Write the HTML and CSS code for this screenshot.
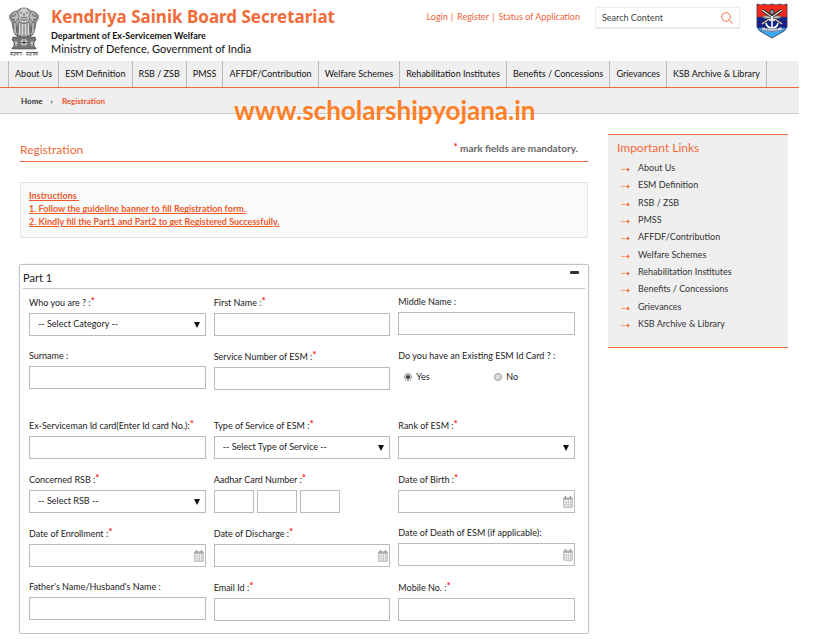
FILE: index.html
```
<!DOCTYPE html>
<html lang="en">
<head>
<meta charset="utf-8">
<title>Registration - Kendriya Sainik Board Secretariat</title>
<link rel="stylesheet" href="styles.css">
</head>
<body>
<svg class="defs" aria-hidden="true">
  <symbol id="calendar" viewBox="0 0 10 12">
    <path d="M1 2h8.200v9.200H.8V2z" fill="#fff" stroke="#aaa" stroke-width="1"/>
    <path d="M.5 1.500h9V4h-9z" fill="#b5b5b5"/>
    <path d="M2.500 0v3M7.500 0v3" stroke="#999" stroke-width="1.200"/>
    <path d="M1 6.300h8M1 8.700h8M3.300 4v7M5.500 4v7M7.500 4v7" stroke="#bbb" stroke-width=".7"/>
  </symbol>
  <symbol id="arrow" viewBox="0 0 9 5">
    <path d="M0 2.500h6.500" stroke="#f5a582" stroke-width="1"/>
    <path d="M6 .4 9 2.500 6 4.600z" fill="#f26a38"/>
  </symbol>
</svg>
<div class="page">
  <header class="header">
    <svg class="emblem" viewBox="0 0 30 50" role="img" aria-label="State Emblem of India">
      <g fill="#aaa" stroke="#444" stroke-width=".6">
        <path d="M3 6q-4 2-2 6l2 4 1 6 5 7h12l5-7 1-6 2-4q2-4-2-6l-4-2H7z"/>
        <path d="M9 5q0-4 6-4t6 4l1 5-3 5q-4 3-8 0l-3-5z" fill="#ccc"/>
        <path d="M3 6q4-3 6 0l1 5-4 4-4-3zM27 6q-4-3-6 0l-1 5 4 4 4-3z" fill="#bbb"/>
        <path d="M10 15q5 4 10 0l1 14H9z" fill="#ddd"/>
        <path d="M4 15l4 2 1 12-4-3zM26 15l-4 2-1 12 4-3z" fill="#bbb"/>
        <path d="M4 30h22l1 3-2 2v4l2 2v1H3v-1l2-2v-4l-2-2z" fill="#777"/>
        <circle cx="15" cy="35.500" r="4" fill="#eee"/>
      </g>
      <g fill="none" stroke="#333" stroke-width=".7">
        <path d="M11 6h2M17 6h2M15 6v3M12 10q3 2 6 0M11 12q4 3 8 0M10 4l2-2M20 4l-2-2M3 9h3M24 9h3M3 12l3 1M27 12l-3 1M5 7l2 1M25 7l-2 1"/>
        <path d="M12 17v11M15 18v11M18 17v11M7 18l1 8M23 18l-1 8M11 28v2M19 28v2M6 27l3 3M24 27l-3 3"/>
        <path d="M15 31.500v8M11 35.500h8M12.200 32.700l5.600 5.600M17.800 32.700l-5.600 5.600"/>
      </g>
      <path d="M6 36h3M21 36h3M7 34v5M23 34v5" stroke="#ddd" stroke-width="1"/>
      <path d="M1 45.500h12M17 45.500h12" stroke="#444" stroke-width=".8"/>
      <path d="M3 45.500v3M6 45.500v3M9 45.500v3M12 45.500v3M19 45.500v3M22 45.500v3M25 45.500v3M28 45.500v3M1 47.500h2M4 48h2M7 47h2M17 47.500h2M20 48h2M25 47h3" stroke="#555" stroke-width=".8"/>
    </svg>
    <div class="brand">
      <h1>Kendriya Sainik Board Secretariat</h1>
      <p class="dept">Department of Ex-Servicemen Welfare</p>
      <p class="ministry">Ministry of Defence, Government of India</p>
    </div>
    <div class="account"><a href="#">Login</a><i>|</i><a href="#">Register</a><i>|</i><a href="#">Status of Application</a></div>
    <form class="search">
      <input type="text" placeholder="Search Content" aria-label="Search Content">
      <button type="button" aria-label="Search">
        <svg viewBox="0 0 12 12" width="12" height="12" fill="none" stroke="#f0703f"><circle cx="5" cy="5" r="4.300"/><path d="M8.200 8.200 11.600 11.600"/></svg>
      </button>
    </form>
    <svg class="crest" viewBox="0 0 32 36" role="img" aria-label="Kendriya Sainik Board crest">
      <defs><clipPath id="shield"><path d="M1 1q4 2 7 0 4 2 8 0 4 2 8 0 3 2 7 0v23q-1 4-8 7l-7 4-7-4q-7-3-8-7z"/></clipPath></defs>
      <g clip-path="url(#shield)">
        <path fill="#f52a1d" d="M0 0h32v14H0z"/><path fill="#15248c" d="M0 14h32v11H0z"/><path fill="#3fa9f5" d="M0 25h32v11H0z"/>
      </g>
      <path d="M1 1q4 2 7 0 4 2 8 0 4 2 8 0 3 2 7 0v23q-1 4-8 7l-7 4-7-4q-7-3-8-7z" fill="none" stroke="#334" stroke-width=".8"/>
      <path d="M6 7 26 21M26 7 6 21" stroke="#222" stroke-width="3"/>
      <path d="M6 7 26 21M26 7 6 21" stroke="#ddd" stroke-width="1.300"/>
      <path d="M5 14q6-3 11 0 5-3 11 0-6 3-11 1-6 2-11-1z" fill="#bbb" stroke="#333" stroke-width=".6"/>
      <circle cx="16" cy="9" r="2.400" fill="#999" stroke="#222"/>
      <path d="M16 13v13M13 17h6M10 20q1 5 6 5t6-5" fill="none" stroke="#fff" stroke-width="1.600"/>
      <path d="M6 24q10 4 20 0v3q-10 3-20 0z" fill="#eee" stroke="#446" stroke-width=".6"/>
      <path d="M9 26.500q7 2 14 0" fill="none" stroke="#779" stroke-dasharray="1 1"/>
    </svg>
  </header>
  <nav class="nav">
    <ul>
      <li><a href="#">About Us</a></li><li><a href="#">ESM Definition</a></li><li><a href="#">RSB / ZSB</a></li><li><a href="#">PMSS</a></li><li><a href="#">AFFDF/Contribution</a></li><li><a href="#">Welfare Schemes</a></li><li><a href="#">Rehabilitation Institutes</a></li><li><a href="#">Benefits / Concessions</a></li><li><a href="#">Grievances</a></li><li><a href="#">KSB Archive &amp; Library</a></li>
    </ul>
  </nav>
  <div class="crumbs">
    <a href="#">Home</a><span class="sep">›</span><span class="current">Registration</span>
    <div class="watermark">www.scholarshipyojana.in</div>
  </div>
  <div class="content">
    <main>
      <div class="title">
        <h2>Registration</h2>
        <p><sup>*</sup> mark fields are mandatory.</p>
      </div>
      <div class="notice">
        <p>Instructions&nbsp;</p>
        <p>1. Follow the guideline banner to fill Registration form.</p>
        <p>2. Kindly fill the Part1 and Part2 to get Registered Successfully.</p>
      </div>
      <form class="panel">
        <div class="panel-head"><h3>Part 1</h3><button type="button" aria-label="Collapse"></button></div>
        <div class="row">
          <div class="field req"><label for="who">Who you are ? :<sup>*</sup></label><div class="select"><select id="who"><option>-- Select Category --</option></select></div></div>
          <div class="field req"><label for="first">First Name :<sup>*</sup></label><input class="box" id="first" type="text"></div>
          <div class="field"><label for="middle">Middle Name :</label><input class="box" id="middle" type="text"></div>
        </div>
        <div class="row tall">
          <div class="field"><label for="surname">Surname :</label><input class="box" id="surname" type="text"></div>
          <div class="field req"><label for="service">Service Number of ESM :<sup>*</sup></label><input class="box" id="service" type="text"></div>
          <div class="field" role="group" aria-labelledby="card"><span class="label" id="card">Do you have an Existing ESM Id Card ? :</span>
            <div class="radios"><label><input type="radio" name="card" checked>Yes</label><label><input type="radio" name="card">No</label></div></div>
        </div>
        <div class="row">
          <div class="field req"><label for="idcard">Ex-Serviceman Id card(Enter Id card No.):<sup>*</sup></label><input class="box" id="idcard" type="text"></div>
          <div class="field req"><label for="type">Type of Service of ESM :<sup>*</sup></label><div class="select"><select id="type"><option>-- Select Type of Service --</option></select></div></div>
          <div class="field req"><label for="rank">Rank of ESM :<sup>*</sup></label><div class="select"><select id="rank"><option></option></select></div></div>
        </div>
        <div class="row">
          <div class="field req"><label for="rsb">Concerned RSB :<sup>*</sup></label><div class="select"><select id="rsb"><option>-- Select RSB --</option></select></div></div>
          <div class="field req"><label for="aadhar">Aadhar Card Number :<sup>*</sup></label><div class="parts"><input class="box" id="aadhar" type="text"><input class="box" type="text" aria-label="Aadhar Card Number, second part"><input class="box" type="text" aria-label="Aadhar Card Number, third part"></div></div>
          <div class="field req"><label for="birth">Date of Birth :<sup>*</sup></label><div class="date"><input id="birth" type="text"><button type="button" aria-label="Choose date"><svg><use href="#calendar"/></svg></button></div></div>
        </div>
        <div class="row">
          <div class="field req"><label for="enroll">Date of Enrollment :<sup>*</sup></label><div class="date"><input id="enroll" type="text"><button type="button" aria-label="Choose date"><svg><use href="#calendar"/></svg></button></div></div>
          <div class="field req"><label for="discharge">Date of Discharge :<sup>*</sup></label><div class="date"><input id="discharge" type="text"><button type="button" aria-label="Choose date"><svg><use href="#calendar"/></svg></button></div></div>
          <div class="field"><label for="death">Date of Death of ESM (if applicable):</label><div class="date"><input id="death" type="text"><button type="button" aria-label="Choose date"><svg><use href="#calendar"/></svg></button></div></div>
        </div>
        <div class="row">
          <div class="field"><label for="father">Father's Name/Husband's Name :</label><input class="box" id="father" type="text"></div>
          <div class="field req"><label for="email">Email Id :<sup>*</sup></label><input class="box" id="email" type="text"></div>
          <div class="field req"><label for="mobile">Mobile No. :<sup>*</sup></label><input class="box" id="mobile" type="text"></div>
        </div>
      </form>
    </main>
    <aside>
      <h2>Important Links</h2>
      <ul>
        <li><svg><use href="#arrow"/></svg><a href="#">About Us</a></li>
        <li><svg><use href="#arrow"/></svg><a href="#">ESM Definition</a></li>
        <li><svg><use href="#arrow"/></svg><a href="#">RSB / ZSB</a></li>
        <li><svg><use href="#arrow"/></svg><a href="#">PMSS</a></li>
        <li><svg><use href="#arrow"/></svg><a href="#">AFFDF/Contribution</a></li>
        <li><svg><use href="#arrow"/></svg><a href="#">Welfare Schemes</a></li>
        <li><svg><use href="#arrow"/></svg><a href="#">Rehabilitation Institutes</a></li>
        <li><svg><use href="#arrow"/></svg><a href="#">Benefits / Concessions</a></li>
        <li><svg><use href="#arrow"/></svg><a href="#">Grievances</a></li>
        <li><svg><use href="#arrow"/></svg><a href="#">KSB Archive &amp; Library</a></li>
      </ul>
    </aside>
  </div>
</div>
</body>
</html>
```

FILE: styles.css
```
* { box-sizing: border-box; }
body { margin: 0; background: #fff; color: #222; font: 9px/16px Lato, sans-serif; }
h1, h2, h3, p, ul { margin: 0; padding: 0; }
ul { list-style: none; }
a { color: inherit; text-decoration: none; }
input, select, button { font: inherit; color: inherit; margin: 0; padding: 0; border: 0; background: none; border-radius: 0; appearance: none; outline: 0; min-width: 0; }
sup { color: #f22; font-size: 10px; font-weight: bold; line-height: 0; vertical-align: 2px; }
.defs { position: absolute; width: 0; height: 0; }
.page { padding-right: 19px; }

.header { display: flex; align-items: flex-start; height: 61px; padding: 0 11px 0 9px; }
.emblem { flex: none; width: 30px; height: 50px; margin-top: 7px; }
.brand { margin-left: 12px; padding-top: 6px; white-space: nowrap; color: #111; }
.brand h1 { font: bold 17px/21px "Noto Sans", sans-serif; color: #f26c3a; }
.dept { margin-top: 2px; font-size: 9px; font-weight: bold; line-height: 13px; }
.ministry { font-size: 11px; line-height: 14px; }
.account { margin-left: auto; padding-top: 9px; color: #f0653a; white-space: nowrap; }
.account i { font-style: normal; margin: 0 4px 0 3px; }
.search { display: flex; align-items: center; flex: none; width: 145px; height: 22px; margin: 7px 0 0 15px; padding: 0 6px; border: 1px solid #eee; border-bottom: 2px solid #e8e8e8; }
.search input { flex: 1; color: #333; }
.search input::placeholder { color: #444; opacity: 1; }
.search button { display: flex; }
.crest { flex: none; width: 32px; height: 36px; margin: 3px 0 0 16px; }

.nav { background: #efefef; border-bottom: 1px solid #f0683c; padding: 0 32px 0 8px; color: #111; }
.nav ul { display: flex; border-left: 1px solid #bbb; }
.nav li { flex: 1 0 auto; text-align: center; line-height: 26px; border-right: 1px solid #bbb; white-space: nowrap; }
.crumbs { position: relative; display: flex; height: 26px; padding-left: 21px; font-size: 8px; font-weight: bold; line-height: 26px; background: #efefef; border-bottom: 1px solid #ccc; color: #333; }
.sep { margin: 0 9px 0 8px; }
.current { color: #f0532d; }
.watermark { position: absolute; left: 234px; top: 6px; font-size: 26px; line-height: 32px; font-weight: bold; color: #ff7f27; }

.content { display: flex; gap: 20px; align-items: flex-start; padding: 20px 11px 0 20px; }
main { flex: 1; min-width: 0; }
.title { display: flex; justify-content: space-between; height: 28px; padding-right: 10px; border-bottom: 1px solid #f0683c; }
.title h2 { font-weight: normal; font-size: 12px; line-height: 32px; color: #f26a38; }
.title p { font-size: 10px; line-height: 29px; font-weight: bold; color: #666; }
.notice { margin-top: 20px; padding: 6px 8px 9px; background: #f9fbfa; border: 1px solid #e3e3e3; font-weight: bold; line-height: 13px; color: #f0582a; text-decoration: underline; }
.panel { margin: 26px -1px 0; padding: 0 3px 12px; border: 1px solid #bcc4cc; border-radius: 2px; box-shadow: 0 0 2px #d5dde5; }
.panel-head { display: flex; justify-content: space-between; height: 24px; border-bottom: 1px solid #c8c8c8; }
.panel-head h3 { font-weight: normal; font-size: 11px; line-height: 26px; color: #222; }
.panel-head button { width: 9px; height: 3px; margin: 6px 6px 0 0; background: #333; border-radius: 1px; }
.row { display: grid; grid-template-columns: repeat(3, minmax(0, 1fr)); gap: 8px; align-items: start; height: 54px; padding: 0 10px 0 6px; }
.panel-head + .row { margin-top: 7px; }
.tall { height: 69px; }
.row:last-child { height: 40px; }
.field > label, .label { display: block; height: 16px; line-height: 11px; white-space: nowrap; }
.req > label { height: 17px; line-height: 13px; }
.box, .select, .date { display: flex; align-items: center; width: 100%; height: 23px; border: 1px solid #bbb; background: #fff; }
.select select { flex: 1; height: 100%; padding: 0 0 2px 8px; }
.select::after { content: ""; margin-right: 5px; border: 3px solid transparent; border-top: 6px solid #111; border-bottom: 0; }
.date input { flex: 1; }
.date button { display: flex; margin-right: 1px; }
.date svg { width: 10px; height: 12px; }
.parts { display: flex; gap: 3px; }
.parts .box { width: 40px; }
.radios { display: flex; gap: 4px; padding: 3px 0 0 6px; }
.radios label { display: flex; align-items: center; gap: 4px; flex: 0 0 86px; }
.radios label:last-child { flex: 1; }
.radios input { width: 8px; height: 8px; border: 1px solid #999; border-radius: 50%; background: #ddd; }
.radios input:checked { background: radial-gradient(circle, #444 0 2px, #ddd 2px); }

aside { width: 180px; padding: 4px 9px 15px; background: #efefef; border-top: 1px solid #f0683c; border-bottom: 1px solid #f0683c; color: #333; }
aside h2 { margin-bottom: 3px; font-weight: normal; font-size: 12px; line-height: 17px; color: #f26a38; }
aside ul { display: grid; grid-auto-rows: 1fr; min-height: 173px; }
aside li { display: flex; align-items: center; gap: 8px; padding-left: 4px; line-height: 17px; }
aside svg { width: 9px; height: 5px; margin-top: 4px; }
```
